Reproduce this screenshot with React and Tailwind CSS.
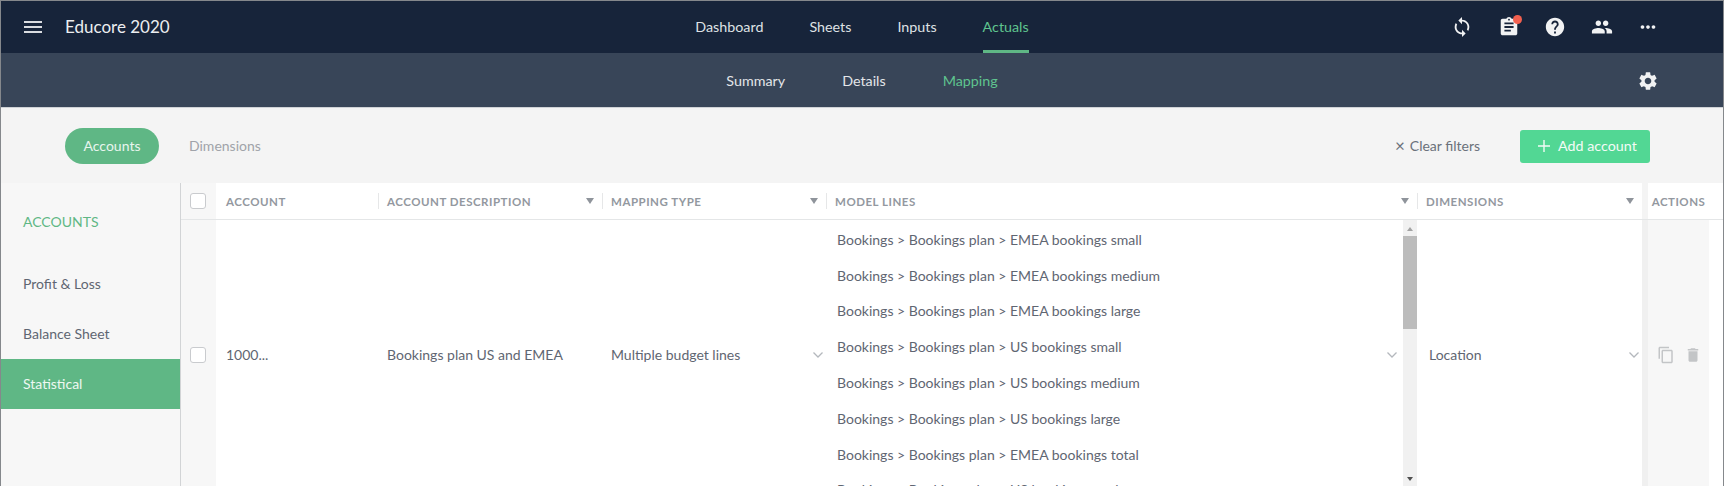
import React from 'react';

const ICONS = {
  menu: 'M3 18h18v-2H3v2zm0-5h18v-2H3v2zm0-7v2h18V6H3z',
  sync: 'M12 4V1L8 5l4 4V6c3.31 0 6 2.69 6 6 0 1.01-.25 1.97-.7 2.8l1.46 1.46C19.54 15.03 20 13.57 20 12c0-4.42-3.58-8-8-8zm0 14c-3.31 0-6-2.69-6-6 0-1.01.25-1.97.7-2.8L5.24 7.74C4.46 8.97 4 10.43 4 12c0 4.42 3.58 8 8 8v3l4-4-4-4v3z',
  assignment: 'M19 3h-4.18C14.4 1.84 13.3 1 12 1c-1.3 0-2.4.84-2.82 2H5c-1.1 0-2 .9-2 2v14c0 1.1.9 2 2 2h14c1.1 0 2-.9 2-2V5c0-1.1-.9-2-2-2zm-7 0c.55 0 1 .45 1 1s-.45 1-1 1-1-.45-1-1 .45-1 1-1zm2 14H7v-2h7v2zm3-4H7v-2h10v2zm0-4H7V7h10v2z',
  help: 'M12 2C6.48 2 2 6.48 2 12s4.48 10 10 10 10-4.48 10-10S17.52 2 12 2zm1 17h-2v-2h2v2zm2.07-7.75l-.9.92C13.45 12.9 13 13.5 13 15h-2v-.5c0-1.1.45-2.1 1.17-2.83l1.24-1.26c.37-.36.59-.86.59-1.41 0-1.1-.9-2-2-2s-2 .9-2 2H8c0-2.21 1.79-4 4-4s4 1.79 4 4c0 .88-.36 1.68-.93 2.25z',
  people: 'M16 11c1.66 0 2.99-1.34 2.99-3S17.66 5 16 5c-1.66 0-3 1.34-3 3s1.34 3 3 3zm-8 0c1.66 0 2.99-1.34 2.99-3S9.66 5 8 5C6.34 5 5 6.34 5 8s1.34 3 3 3zm0 2c-2.33 0-7 1.17-7 3.5V19h14v-2.5c0-2.33-4.67-3.5-7-3.5zm8 0c-.29 0-.62.02-.97.05 1.16.84 1.97 1.97 1.97 3.45V19h6v-2.5c0-2.33-4.67-3.5-7-3.5z',
  more: 'M6 10c-1.1 0-2 .9-2 2s.9 2 2 2 2-.9 2-2-.9-2-2-2zm12 0c-1.1 0-2 .9-2 2s.9 2 2 2 2-.9 2-2-.9-2-2-2zm-6 0c-1.1 0-2 .9-2 2s.9 2 2 2 2-.9 2-2-.9-2-2-2z',
  settings: 'M19.14 12.94c.04-.3.06-.61.06-.94 0-.32-.02-.64-.07-.94l2.03-1.58c.18-.14.23-.41.12-.61l-1.92-3.32c-.12-.22-.37-.29-.59-.22l-2.39.96c-.5-.38-1.03-.7-1.62-.94l-.36-2.54c-.04-.24-.24-.41-.48-.41h-3.84c-.24 0-.43.17-.47.41l-.36 2.54c-.59.24-1.13.57-1.62.94l-2.39-.96c-.22-.08-.47 0-.59.22L2.74 8.87c-.12.21-.08.47.12.61l2.03 1.58c-.05.3-.09.63-.09.94s.02.64.07.94l-2.03 1.58c-.18.14-.23.41-.12.61l1.92 3.32c.12.22.37.29.59.22l2.39-.96c.5.38 1.03.7 1.62.94l.36 2.54c.05.24.24.41.48.41h3.84c.24 0 .44-.17.47-.41l.36-2.54c.59-.24 1.13-.56 1.62-.94l2.39.96c.22.08.47 0 .59-.22l1.92-3.32c.12-.22.07-.47-.12-.61l-2.01-1.58zM12 15.6c-1.98 0-3.6-1.62-3.6-3.6s1.62-3.6 3.6-3.6 3.6 1.62 3.6 3.6-1.62 3.6-3.6 3.6z',
  copy: 'M16 1H4c-1.1 0-2 .9-2 2v14h2V3h12V1zm3 4H8c-1.1 0-2 .9-2 2v14c0 1.1.9 2 2 2h11c1.1 0 2-.9 2-2V7c0-1.1-.9-2-2-2zm0 16H8V7h11v14z',
  trash: 'M6 19c0 1.1.9 2 2 2h8c1.1 0 2-.9 2-2V7H6v12zM19 4h-3.5l-1-1h-5l-1 1H5v2h14V4z',
};

const GRID = 'grid grid-cols-[35px_162px_224px_224px_591px_225px_6px_61px_1fr]';

const MODEL_LINES = [
  'EMEA bookings small',
  'EMEA bookings medium',
  'EMEA bookings large',
  'US bookings small',
  'US bookings medium',
  'US bookings large',
  'EMEA bookings total',
  'US bookings total',
];

function Icon({ name, size = 22, className = '' }) {
  return (
    <svg width={size} height={size} viewBox="0 0 24 24" fill="currentColor" className={className}>
      <path d={ICONS[name]} />
    </svg>
  );
}

function SortArrow() {
  return (
    <svg width="8" height="6" viewBox="0 0 8 6" className="shrink-0 text-[#8f949b]" fill="currentColor">
      <path d="M0 0h8L4 6z" />
    </svg>
  );
}

function Chevron() {
  return (
    <svg width="10" height="6" viewBox="0 0 10 6" fill="none" stroke="#b4b8bd" strokeWidth="1.3" className="shrink-0">
      <path d="M.5.5 5 5 9.5.5" />
    </svg>
  );
}

function Checkbox() {
  return <div className="h-4 w-4 rounded-[3px] border border-[#c9cbce] bg-white" />;
}

function HeaderCell({ label, sep, arrow }) {
  return (
    <div className="flex h-full items-center justify-between bg-white pr-2">
      <div className="flex h-4 items-center">
        {sep && <div className="mr-2 h-4 w-px bg-[#e6e7e8]" />}
        <span className={sep ? 'pt-[2px]' : 'pl-[10px] pt-[2px]'}>{label}</span>
      </div>
      {arrow && <SortArrow />}
    </div>
  );
}

export default function App() {
  return (
    <div className="flex h-[486px] flex-col overflow-hidden border-x border-t border-[#85888c] bg-white font-['Lato',sans-serif] text-sm text-[#5f6672]">
      {/* Top nav */}
      <header className="grid h-[52px] shrink-0 grid-cols-[1fr_auto_1fr] bg-[#17243a]">
        <div className="flex items-center pl-[20px]">
          <Icon name="menu" size={24} className="text-[#d9dce0]" />
          <span className="ml-5 text-[17px] text-[#eceef0]">Educore 2020</span>
        </div>
        <nav className="flex gap-[46px] text-[14.3px] text-[#dfe2e5]">
          <span className="flex items-center">Dashboard</span>
          <span className="flex items-center">Sheets</span>
          <span className="flex items-center">Inputs</span>
          <span className="flex items-center border-b-[3px] border-[#5fb785] pt-[3px] text-[#5fc48f]">Actuals</span>
        </nav>
        <div className="flex items-center justify-end gap-[24.5px] pr-[64px] text-[#f1f2f3]">
          <Icon name="sync" />
          <div className="relative">
            <Icon name="assignment" />
            <span className="absolute -top-[1px] -right-[2px] h-[9px] w-[9px] rounded-full bg-[#f2604f]" />
          </div>
          <Icon name="help" />
          <Icon name="people" />
          <Icon name="more" />
        </div>
      </header>

      {/* Sub nav */}
      <div className="grid h-[55px] shrink-0 grid-cols-[1fr_auto_1fr] border-b border-[#cfd2d6] bg-[#384558]">
        <div />
        <nav className="flex items-center gap-[57px] pt-[2px] text-[14.3px] text-[#e4e6e9]">
          <span>Summary</span>
          <span>Details</span>
          <span className="text-[#5fc48f]">Mapping</span>
        </nav>
        <div className="flex items-center justify-end pr-[64px] pt-[2px] text-[#f1f2f3]">
          <Icon name="settings" />
        </div>
      </div>

      {/* Toolbar */}
      <div className="flex h-[75px] shrink-0 items-center bg-[#f4f4f4] pl-[64px] pr-[73px]">
        <span className="flex h-9 w-[94px] items-center justify-center rounded-full bg-[#5fb785] text-[#e8f5ee]">Accounts</span>
        <span className="ml-[30px] text-[#a0a3a9]">Dimensions</span>
        <span className="ml-auto flex items-center text-[#6b717b]">
          <span className="mr-[5px] text-[17px] leading-none">×</span>
          Clear filters
        </span>
        <button className="ml-10 mt-[1px] flex h-[33px] w-[130px] items-center gap-[7px] rounded-[3px] bg-[#52d794] pl-[17px] text-[14.3px] text-[#f2fbf6]">
          <svg width="14" height="14" viewBox="0 0 14 14" stroke="currentColor" strokeWidth="1.4">
            <path d="M7 1v12M1 7h12" />
          </svg>
          Add account
        </button>
      </div>

      <div className="flex min-h-0 flex-1 overflow-hidden">
        {/* Sidebar */}
        <aside className="w-[180px] shrink-0 border-r border-[#d2d4d6] bg-[#f7f7f7] pt-[1px]">
          <div className="flex h-[75px] items-center pl-[22px] text-[#5fb785]">ACCOUNTS</div>
          <div className="flex h-[50px] items-center pl-[22px]">Profit &amp; Loss</div>
          <div className="flex h-[50px] items-center pl-[22px]">Balance Sheet</div>
          <div className="flex h-[50px] items-center bg-[#5fb785] pl-[22px] text-[#eef8f2]">Statistical</div>
        </aside>

        {/* Table */}
        <div className="flex min-w-0 flex-1 flex-col">
          <div className={`${GRID} h-[37px] shrink-0 border-b border-[#e4e6e7] text-[11.5px] font-bold tracking-[0.045em] text-[#9398a0]`}>
            <div className="flex items-center bg-[#f7f7f7] pl-[9px]"><Checkbox /></div>
            <HeaderCell label="ACCOUNT" />
            <HeaderCell label="ACCOUNT DESCRIPTION" sep arrow />
            <HeaderCell label="MAPPING TYPE" sep arrow />
            <HeaderCell label="MODEL LINES" sep arrow />
            <HeaderCell label="DIMENSIONS" sep arrow />
            <div className="bg-[#f4f4f4]" />
            <div className="flex items-center justify-center bg-white pt-[2px]">ACTIONS</div>
            <div />
          </div>

          {/* The row is taller than the window, so it is cut off at the bottom */}
          <div className={`${GRID} h-[270px] shrink-0`}>
            <div className="flex items-center bg-[#f7f7f7] pl-[9px]"><Checkbox /></div>
            <div className="flex items-center pl-[10px]">1000...</div>
            <div className="flex items-center pl-[9px]">Bookings plan US and EMEA</div>
            <div className="flex items-center justify-between pl-[9px] pr-[3px]">
              Multiple budget lines
              <Chevron />
            </div>
            <div className="flex min-h-0 overflow-hidden">
              <div className="min-w-0 flex-1 pl-[11px] pt-[2px]">
                {MODEL_LINES.map((line) => (
                  <div key={line} className="flex h-[35.8px] items-center">
                    Bookings &gt; Bookings plan &gt; {line}
                  </div>
                ))}
              </div>
              <div className="flex items-center pr-[6px]"><Chevron /></div>
              <div className="flex w-[14px] shrink-0 flex-col items-center bg-[#f1f1f1]">
                <svg width="6" height="4" viewBox="0 0 6 4" className="mb-[5px] mt-[7px] text-[#a3a3a3]" fill="currentColor">
                  <path d="M3 0l3 4H0z" />
                </svg>
                <div className="h-[93px] w-full bg-[#bcbcbc]" />
                <svg width="6" height="4" viewBox="0 0 6 4" className="mt-auto mb-[9px] text-[#505050]" fill="currentColor">
                  <path d="M0 0h6L3 4z" />
                </svg>
              </div>
            </div>
            <div className="flex items-center justify-between pl-[12px] pr-[3px]">
              Location
              <Chevron />
            </div>
            <div className="bg-[#f0f0f0]" />
            <div className="flex items-center gap-[9px] bg-[#f7f7f7] pl-[9px] text-[#c3c5c7]">
              <Icon name="copy" size={18} />
              <Icon name="trash" size={18} />
            </div>
            <div />
          </div>
        </div>
      </div>
    </div>
  );
}
